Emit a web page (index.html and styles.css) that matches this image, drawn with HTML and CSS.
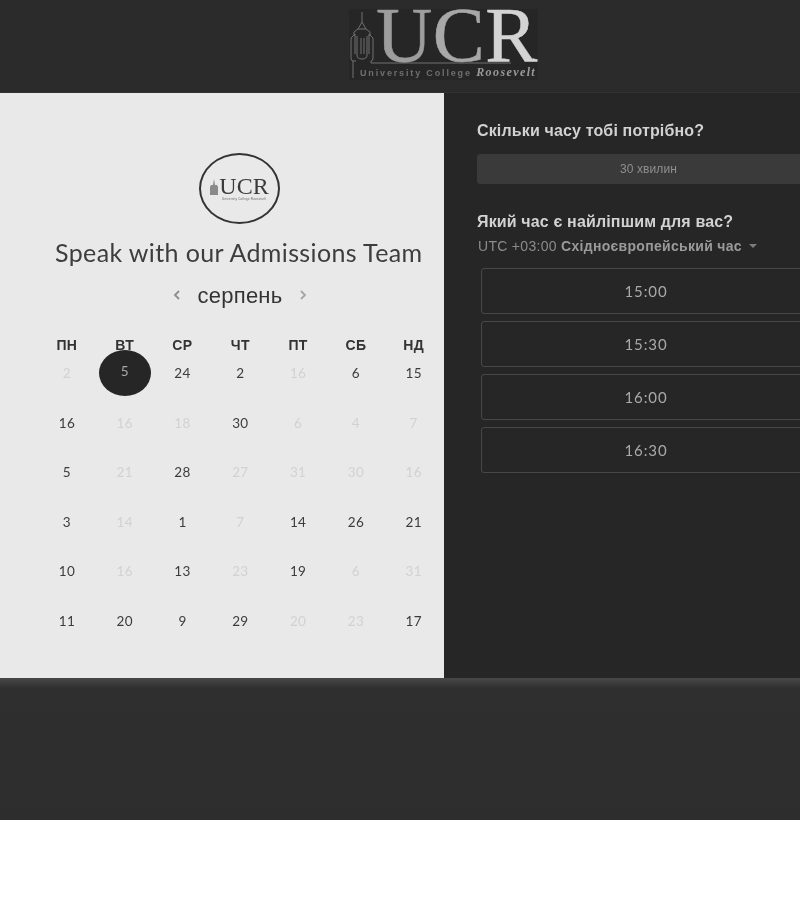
FILE: index.html
```html
<!DOCTYPE html>
<html lang="uk">
<head>
<meta charset="utf-8">
<title>UCR</title>
<link rel="stylesheet" href="styles.css">
</head>
<body>
<div class="page">
  <header class="topbar">
    <div class="brand">
      <svg class="brand-tower" viewBox="0 0 27 71" width="27" height="71" fill="none" stroke="#707070" stroke-width="1">
        <path d="M13 3V13L9 20L5 23V27M13 13L17 20L21 23V27M9 20H17"/>
        <path d="M8 27V46Q8 50 13 50Q18 50 18 46V27M12 29V45M15 29V45"/>
        <path d="M2 29V49Q2 52 4 52H7M6 25L2 29M6 25V45M20 25V45M20 25L24 29V49Q24 52 22 52V54H162"/>
        <path d="M4 52V69"/>
      </svg>
      <div class="brand-text">
        <div class="brand-ucr"><span class="u">U</span><span class="c">C</span><span class="r">R</span></div>
        <div class="brand-sub"><span>University College</span> <em>Roosevelt</em></div>
      </div>
    </div>
  </header>
  <main class="main">
    <section class="left">
      <div class="seal">
        <svg class="seal-tower" viewBox="0 0 8 16" width="8" height="16" fill="#8a8a8a"><path d="M4 0L5 6H7L8 8V16H0V8L1 6H3Z"/></svg>
        <div class="seal-text">
          <div class="seal-ucr">UCR</div>
          <div class="seal-sub">University College Roosevelt</div>
        </div>
      </div>
      <h1 class="title">Speak with our Admissions Team</h1>
      <div class="month">
        <svg class="arrow" viewBox="0 0 7 10" width="7" height="10" fill="none" stroke="#8d8d8d" stroke-width="1.8"><path d="M6 1L2 5L6 9"/></svg>
        <span class="month-name">серпень</span>
        <svg class="arrow" viewBox="0 0 7 10" width="7" height="10" fill="none" stroke="#a5a5a5" stroke-width="1.8"><path d="M1 1L5 5L1 9"/></svg>
      </div>
      <div class="weekdays">
        <span>ПН</span><span>ВТ</span><span>СР</span><span>ЧТ</span><span>ПТ</span><span>СБ</span><span>НД</span>
      </div>
      <div class="days">
        <span class="off">2</span><span class="selected"><b>5</b></span><span>24</span><span>2</span><span class="off">16</span><span>6</span><span>15</span>
        <span>16</span><span class="off">16</span><span class="off">18</span><span>30</span><span class="off">6</span><span class="off">4</span><span class="off">7</span>
        <span>5</span><span class="off">21</span><span>28</span><span class="off">27</span><span class="off">31</span><span class="off">30</span><span class="off">16</span>
        <span>3</span><span class="off">14</span><span>1</span><span class="off">7</span><span>14</span><span>26</span><span>21</span>
        <span>10</span><span class="off">16</span><span>13</span><span class="off">23</span><span>19</span><span class="off">6</span><span class="off">31</span>
        <span>11</span><span>20</span><span>9</span><span>29</span><span class="off">20</span><span class="off">23</span><span>17</span>
      </div>
    </section>
    <section class="right">
      <h2 class="question">Скільки часу тобі потрібно?</h2>
      <div class="duration">30 хвилин</div>
      <h2 class="question second">Який час є найліпшим для вас?</h2>
      <div class="zone">UTC +03:00 <strong>Східноєвропейський час</strong><i class="caret"></i></div>
      <div class="slots">
        <div class="slot">15:00</div>
        <div class="slot">15:30</div>
        <div class="slot">16:00</div>
        <div class="slot">16:30</div>
      </div>
    </section>
  </main>
  <footer class="foot"></footer>
</div>
</body>
</html>
```
FILE: styles.css
```css
html, body {
  margin: 0;
  padding: 0;
  background: #fff;
  overflow: hidden;
}
.page {
  width: 800px;
  height: 820px;
  display: flex;
  flex-direction: column;
  font-family: "Liberation Sans", Arial, sans-serif;
  filter: blur(0.35px);
}
.topbar {
  height: 93px;
  flex: none;
  box-sizing: border-box;
  padding: 9px 0 0 349px;
  background: #2b2b2b;
  border-bottom: 1px solid #333;
}
.brand {
  width: 189px;
  height: 71px;
  background: #262626;
  display: flex;
}
.brand-tower { flex: none; overflow: visible; }
.brand-text { flex: none; width: 162px; }
.brand-ucr {
  font-family: "Liberation Serif", serif;
  font-size: 78px;
  line-height: 52px;
  height: 52px;
  letter-spacing: 0.4px;
  white-space: nowrap;
  -webkit-text-stroke: 0.5px currentColor;
}
.brand-ucr span { display: inline-block; height: 52px; vertical-align: top; }
.brand-ucr .u { color: #9d9d9d; }
.brand-ucr .c { color: #a8a8a8; }
.brand-ucr .r { color: #d4d4d4; }
.brand-sub {
  font-size: 9px;
  line-height: 14px;
  font-weight: bold;
  letter-spacing: 1.85px;
  color: #6f6f6f;
  white-space: nowrap;
  margin: 4px 0 0 -16px;
}
.brand-sub em {
  font-family: "Liberation Serif", serif;
  font-size: 12px;
  letter-spacing: 1.4px;
  color: #9a9a9a;
}
.main {
  height: 585px;
  flex: none;
  display: flex;
  background: #262626;
}
.left {
  width: 444px;
  flex: none;
  box-sizing: border-box;
  padding-top: 60px;
  background: #e9e9e9;
  display: flex;
  flex-direction: column;
}
.seal {
  width: 77px;
  height: 67px;
  margin-left: 199px;
  border: 2px solid #333;
  border-radius: 50%;
  display: flex;
  align-items: center;
  justify-content: center;
  gap: 1px;
}
.seal-tower { margin-bottom: 4px; }
.seal-text { text-align: center; }
.seal-ucr {
  font-family: "Liberation Serif", serif;
  font-size: 24px;
  line-height: 21px;
  color: #3b3b3b;
}
.seal-sub {
  font-size: 3px;
  line-height: 4px;
  letter-spacing: 0.2px;
  color: #666;
  white-space: nowrap;
}
.title {
  margin: 13px 0 0 55px;
  font-family: Lato, sans-serif;
  font-weight: 400;
  font-size: 25px;
  line-height: 30px;
  letter-spacing: 0.38px;
  color: #3d3d3d;
  white-space: nowrap;
}
.month {
  margin-top: 16px;
  padding-left: 36px;
  height: 26px;
  display: flex;
  justify-content: center;
  align-items: center;
  gap: 18px;
}
.month-name {
  font-size: 22px;
  line-height: 26px;
  letter-spacing: 0.25px;
  color: #333;
}
.arrow { margin-top: -3px; }
.weekdays, .days {
  display: grid;
  grid-template-columns: repeat(7, 57.8px);
  margin-left: 38px;
  text-align: center;
}
.weekdays {
  margin-top: 26px;
  height: 20px;
  font-size: 14px;
  line-height: 20px;
  font-weight: bold;
  letter-spacing: 0.4px;
  color: #333;
}
.days {
  grid-auto-rows: 49.5px;
  margin-top: 8px;
  font-family: Lato, sans-serif;
  font-size: 13.5px;
  line-height: 20px;
  color: #3c3c3c;
  letter-spacing: 0.3px;
}
.days span { position: relative; }
.days .off { color: #d2d2d2; }
.selected b {
  position: absolute;
  left: 3px;
  top: -13px;
  width: 52px;
  height: 46px;
  border-radius: 50%;
  background: #262626;
  color: #a8a8a8;
  font-weight: 400;
  line-height: 43px;
}
.right {
  flex: 1;
  min-width: 0;
  overflow: hidden;
  padding: 29px 0 0 33px;
}
.question {
  margin: 0;
  font-size: 16px;
  line-height: 18px;
  font-weight: bold;
  letter-spacing: 0.15px;
  color: #d2d2d2;
}
.question.second { margin-top: 29px; }
.duration {
  width: 343px;
  height: 30px;
  margin-top: 14px;
  background: #3a3a3a;
  border-radius: 3px;
  font-size: 12px;
  line-height: 30px;
  letter-spacing: 0.1px;
  text-align: center;
  color: #8f8f8f;
}
.zone {
  margin-top: 6px;
  font-size: 14px;
  line-height: 18px;
  color: #8c8c8c;
  letter-spacing: 0.3px;
  white-space: nowrap;
  padding-left: 1px;
}
.zone strong { color: #9a9a9a; font-weight: bold; }
.caret {
  display: inline-block;
  margin-left: 7px;
  vertical-align: 3px;
  border-left: 4px solid transparent;
  border-right: 4px solid transparent;
  border-top: 4px solid #7c7c7c;
}
.slots {
  display: flex;
  flex-direction: column;
  gap: 7.1px;
  margin: 13px 0 0 4px;
}
.slot {
  width: 330px;
  height: 46px;
  box-sizing: border-box;
  border: 1px solid #474747;
  border-radius: 3px;
  font-family: Lato, sans-serif;
  font-size: 15px;
  line-height: 45px;
  letter-spacing: 0.9px;
  text-align: center;
  color: #a9a9a9;
}
.foot {
  flex: 1;
  background: linear-gradient(#484848, #2f2f2f 10px, #2d2d2d);
}
```
